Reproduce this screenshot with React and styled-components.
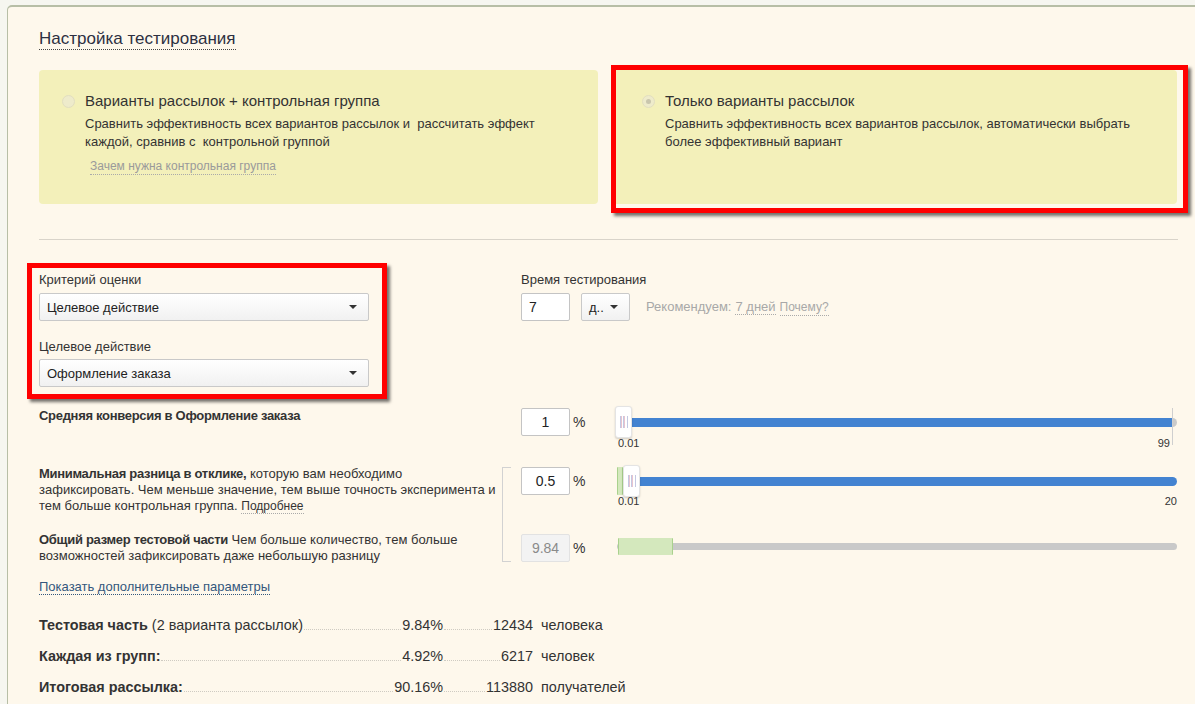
import React from 'react';
import styled, { createGlobalStyle } from 'styled-components';

const Global = createGlobalStyle`
  html, body { margin: 0; padding: 0; }
  body {
    background: #f6f6f0;
    font-family: "Liberation Sans", Arial, sans-serif;
    color: #333;
    overflow: hidden;
  }
  * { box-sizing: border-box; }
`;

const Panel = styled.div`
  margin: 5px 0 0 7px;
  width: 1230px;
  min-height: 720px;
  background: #fef8ec;
  border: 1px solid #b7bea6;
  border-top-width: 2px;
  border-radius: 5px 0 0 0;
  padding: 22px 0 0 31px;
`;

const Inner = styled.div`
  width: 1139px;
`;

const Title = styled.div`
  width: fit-content;
  font-size: 17px;
  line-height: 20px;
  color: #2d3042;
  border-bottom: 1px dotted #444;
`;

const Cards = styled.div`
  display: grid;
  grid-template-columns: 559px 564px;
  column-gap: 15px;
  margin-top: 20px;
`;

const Card = styled.div`
  position: relative;
  height: 134px;
  background: #f3f0ba;
  border-radius: 4px;
  padding: 21px 20px 0 ${p => p.$pad}px;
  display: grid;
  grid-template-columns: 13px 1fr;
  column-gap: 10px;
  align-content: start;
`;

const Radio = styled.div`
  width: 13px;
  height: 13px;
  margin-top: 4px;
  border-radius: 50%;
  background: #eeebcb;
  border: 1px solid #e2dec0;
  display: flex;
  align-items: center;
  justify-content: center;
  &::after {
    content: '';
    width: 5px;
    height: 5px;
    border-radius: 50%;
    background: ${p => (p.$checked ? '#c9c6ad' : 'transparent')};
  }
`;

const CardBody = styled.div`
  display: flex;
  flex-direction: column;
`;

const CardTitle = styled.div`
  font-size: 15px;
  line-height: 20px;
  color: #333;
`;

const CardDesc = styled.div`
  margin-top: 4px;
  font-size: 13px;
  line-height: 18px;
  color: #333;
`;

const MutedLink = styled.span`
  align-self: flex-start;
  margin: 8px 0 0 5px;
  font-size: 12px;
  line-height: 15px;
  color: #9a9a9a;
  border-bottom: 1px dotted #aaa;
`;

const Highlight = styled.div`
  position: absolute;
  left: ${p => p.$l}px;
  top: ${p => p.$t}px;
  right: ${p => p.$r}px;
  bottom: ${p => p.$b}px;
  border: 5px solid #ff0000;
  box-shadow: 3px 3px 3px rgba(0, 0, 0, 0.55);
  pointer-events: none;
`;

const Divider = styled.div`
  margin-top: 35px;
  height: 1px;
  background: #d9d4ca;
`;

const Criteria = styled.div`
  display: grid;
  grid-template-columns: 482px 1fr;
  margin-top: 32px;
`;

const FieldCol = styled.div`
  position: relative;
  width: 330px;
  display: flex;
  flex-direction: column;
`;

const Label = styled.div`
  font-size: 13px;
  line-height: 16px;
  color: #333;
  margin-top: ${p => p.$mt || 0}px;
`;

const Select = styled.div`
  margin-top: ${p => p.$mt || 0}px;
  margin-left: ${p => p.$ml || 0}px;
  width: ${p => p.$w || 330}px;
  height: 28px;
  border: 1px solid #c9c9c9;
  border-radius: 2px;
  background: linear-gradient(#ffffff, #f1f1f1);
  display: flex;
  align-items: center;
  justify-content: space-between;
  padding: 0 11px 0 7px;
  font-size: 13px;
  color: #222;
  flex-shrink: 0;
`;

const Caret = styled.span`
  width: 0;
  height: 0;
  border-left: 4px solid transparent;
  border-right: 4px solid transparent;
  border-top: 4px solid #333;
`;

const TimeCol = styled.div`
  display: flex;
  flex-direction: column;
`;

const TimeRow = styled.div`
  display: flex;
  align-items: center;
  margin-top: 5px;
`;

const Field = styled.input`
  width: 49px;
  height: 28px;
  border: 1px solid ${p => (p.disabled ? '#e2e2e2' : '#c4c4c4')};
  border-radius: 2px;
  background: ${p => (p.disabled ? '#f3f3f3' : '#fff')};
  font-family: "Liberation Sans", Arial, sans-serif;
  font-size: 14px;
  color: ${p => (p.disabled ? '#8a8a8a' : '#222')};
  text-align: ${p => p.$align || 'center'};
  padding: 0 ${p => (p.$align === 'left' ? '7px' : '2px')};
  margin: 0;
  outline: none;
`;

const Recommend = styled.div`
  margin-left: 16px;
  font-size: 13px;
  color: #a8a8a8;
  display: flex;
  align-items: baseline;
  gap: 4px;
`;

const Dotted = styled.span`
  border-bottom: 1px dotted #aaa;
  font-size: ${p => p.$fs || 13}px;
  line-height: 15px;
  letter-spacing: 0;
`;

const Params = styled.div`
  display: grid;
  grid-template-columns: 463px 19px 96px 560px;
  grid-template-rows: 59px 67px 28px;
  margin-top: 21px;
`;

const ParamText = styled.div`
  grid-column: 1;
  grid-row: ${p => p.$row};
  font-size: 13px;
  line-height: 16px;
  color: #333;
  margin-top: ${p => p.$mt || 0}px;
  b { font-weight: 700; letter-spacing: -0.3px; }
`;

const Bracket = styled.div`
  grid-column: 2;
  grid-row: 2 / 4;
  width: 9px;
  border: 1px solid #d2d2d2;
  border-right: none;
`;

const ValueCell = styled.div`
  grid-column: 3;
  grid-row: ${p => p.$row};
  display: flex;
  align-items: flex-start;
`;

const Percent = styled.span`
  margin: 6px 0 0 3px;
  font-size: 14px;
  color: #333;
`;

const SliderCell = styled.div`
  grid-column: 4;
  grid-row: ${p => p.$row};
  position: relative;
  height: 28px;
`;

const Track = styled.div`
  position: absolute;
  left: ${p => p.$l}px;
  right: 0;
  top: ${p => p.$t}px;
  height: ${p => p.$h}px;
  border-radius: ${p => p.$h / 2}px;
  background: ${p => p.$c};
`;

const Fill = styled.div`
  position: absolute;
  left: ${p => p.$l}px;
  right: ${p => p.$r}px;
  top: 10px;
  height: 9px;
  background: #4383d1;
  border-radius: ${p => (p.$r === 0 ? '0 5px 5px 0' : '0')};
`;

const EndMark = styled.div`
  position: absolute;
  left: 555px;
  top: 0;
  width: 1px;
  height: 37px;
  background: #cfcfcf;
`;

const GreenBox = styled.div`
  position: absolute;
  left: ${p => p.$l}px;
  top: ${p => p.$t}px;
  width: ${p => p.$w}px;
  height: ${p => p.$h}px;
  background: #d4e8bd;
  border: 1px solid #a9d18d;
  border-top-color: #d4e8bd;
  border-bottom-color: #d4e8bd;
`;

const Thumb = styled.div`
  position: absolute;
  left: ${p => p.$l}px;
  top: -2px;
  width: 17px;
  height: 32px;
  background: #fff;
  border: 1px solid #e4e4e4;
  border-radius: 3px;
  box-shadow: 0 1px 2px rgba(0, 0, 0, 0.18);
  display: flex;
  align-items: center;
  justify-content: center;
  &::after {
    content: '';
    width: 8px;
    height: 12px;
    background: repeating-linear-gradient(
      to right,
      #c3c8e2 0 1px,
      #e8c4cf 1px 2px,
      transparent 2px 3.33px
    );
  }
`;

const ScaleLabels = styled.div`
  position: absolute;
  left: 1px;
  right: ${p => p.$r}px;
  top: ${p => p.$t}px;
  display: flex;
  justify-content: space-between;
  font-size: 11px;
  line-height: 14px;
  color: #333;
`;

const MoreLink = styled.div`
  width: fit-content;
  margin-top: 17px;
  font-size: 13px;
  line-height: 15px;
  color: #34577c;
  border-bottom: 1px dotted #34577c;
`;

const Summary = styled.div`
  margin-top: 20px;
  display: flex;
  flex-direction: column;
`;

const SumRow = styled.div`
  display: flex;
  align-items: baseline;
  height: 31px;
  font-size: 14.4px;
  line-height: 20px;
  color: #333;
`;

const SumCell = styled.div`
  width: ${p => p.$w}px;
  display: flex;
  align-items: baseline;
`;

const Leader = styled.span`
  flex: 1;
  border-bottom: 1px dotted #cfcbc2;
  margin: 0 1px;
`;

const Unit = styled.span`
  margin-left: 8px;
`;

function Slider({ kind, row }) {
  if (kind === 'conv') {
    return (
      <SliderCell $row={row}>
        <Track $l={0} $t={10} $h={9} $c="#cacaca" />
        <Fill $l={15} $r={5} />
        <EndMark />
        <Thumb $l={-2} />
        <ScaleLabels $t={28} $r={7}>
          <span>0.01</span>
          <span>99</span>
        </ScaleLabels>
      </SliderCell>
    );
  }
  if (kind === 'diff') {
    return (
      <SliderCell $row={row}>
        <GreenBox $l={0} $t={0} $w={6} $h={28} />
        <Fill $l={22} $r={0} />
        <Thumb $l={6} />
        <ScaleLabels $t={27} $r={0}>
          <span>0.01</span>
          <span>20</span>
        </ScaleLabels>
      </SliderCell>
    );
  }
  return (
    <SliderCell $row={row}>
      <Track $l={0} $t={9} $h={7} $c="#c9c9c9" />
      <GreenBox $l={1} $t={4} $w={55} $h={17} />
    </SliderCell>
  );
}

const summary = [
  { label: <><b>Тестовая часть</b> (2 варианта рассылок)</>, pct: '9.84%', num: '12434', unit: 'человека' },
  { label: <b>Каждая из групп:</b>, pct: '4.92%', num: '6217', unit: 'человек' },
  { label: <b>Итоговая рассылка:</b>, pct: '90.16%', num: '113880', unit: 'получателей' },
];

export default function App() {
  return (
    <>
      <Global />
      <Panel>
        <Inner>
          <Title>Настройка тестирования</Title>

          <Cards>
            <Card $pad={23}>
              <Radio />
              <CardBody>
                <CardTitle>Варианты рассылок + контрольная группа</CardTitle>
                <CardDesc>
                  Сравнить эффективность всех вариантов рассылок и&nbsp; рассчитать эффект
                  <br />
                  каждой, сравнив с&nbsp; контрольной группой
                </CardDesc>
                <MutedLink>Зачем нужна контрольная группа</MutedLink>
              </CardBody>
            </Card>
            <Card $pad={29}>
              <Radio $checked />
              <CardBody>
                <CardTitle>Только варианты рассылок</CardTitle>
                <CardDesc>
                  Сравнить эффективность всех вариантов рассылок, автоматически выбрать
                  <br />
                  более эффективный вариант
                </CardDesc>
              </CardBody>
              <Highlight $l={-2} $t={-5} $r={-11} $b={-9} />
            </Card>
          </Cards>

          <Divider />

          <Criteria>
            <FieldCol>
              <Label>Критерий оценки</Label>
              <Select $mt={5}>
                Целевое действие
                <Caret />
              </Select>
              <Label $mt={18}>Целевое действие</Label>
              <Select $mt={4}>
                Оформление заказа
                <Caret />
              </Select>
              <Highlight $l={-12} $t={-9} $r={-18} $b={-12} />
            </FieldCol>
            <TimeCol>
              <Label>Время тестирования</Label>
              <TimeRow>
                <Field readOnly value="7" $align="left" />
                <Select $w={49} $ml={11}>
                  д..
                  <Caret />
                </Select>
                <Recommend>
                  <span>Рекомендуем:</span>
                  <Dotted>7 дней</Dotted>
                  <Dotted $fs={12}>Почему?</Dotted>
                </Recommend>
              </TimeRow>
            </TimeCol>
          </Criteria>

          <Params>
            <ParamText $row={1}>
              <b>Средняя конверсия в Оформление заказа</b>
            </ParamText>
            <ValueCell $row={1}>
              <Field readOnly value="1" />
              <Percent>%</Percent>
            </ValueCell>
            <Slider kind="conv" row={1} />

            <ParamText $row={2} $mt={-1}>
              <b>Минимальная разница в отклике,</b> которую вам необходимо
              <br />
              зафиксировать. Чем меньше значение, тем выше точность эксперимента и
              <br />
              тем больше контрольная группа. <Dotted $fs={12}>Подробнее</Dotted>
            </ParamText>
            <Bracket />
            <ValueCell $row={2}>
              <Field readOnly value="0.5" />
              <Percent>%</Percent>
            </ValueCell>
            <Slider kind="diff" row={2} />

            <ParamText $row={3} $mt={-2}>
              <b>Общий размер тестовой части</b> Чем больше количество, тем больше
              <br />
              возможностей зафиксировать даже небольшую разницу
            </ParamText>
            <ValueCell $row={3}>
              <Field readOnly disabled value="9.84" />
              <Percent>%</Percent>
            </ValueCell>
            <Slider kind="size" row={3} />
          </Params>

          <MoreLink>Показать дополнительные параметры</MoreLink>

          <Summary>
            {summary.map((r, i) => (
              <SumRow key={i}>
                <SumCell $w={404}>
                  <span>{r.label}</span>
                  <Leader />
                  <span>{r.pct}</span>
                </SumCell>
                <SumCell $w={90}>
                  <Leader />
                  <span>{r.num}</span>
                </SumCell>
                <Unit>{r.unit}</Unit>
              </SumRow>
            ))}
          </Summary>
        </Inner>
      </Panel>
    </>
  );
}
